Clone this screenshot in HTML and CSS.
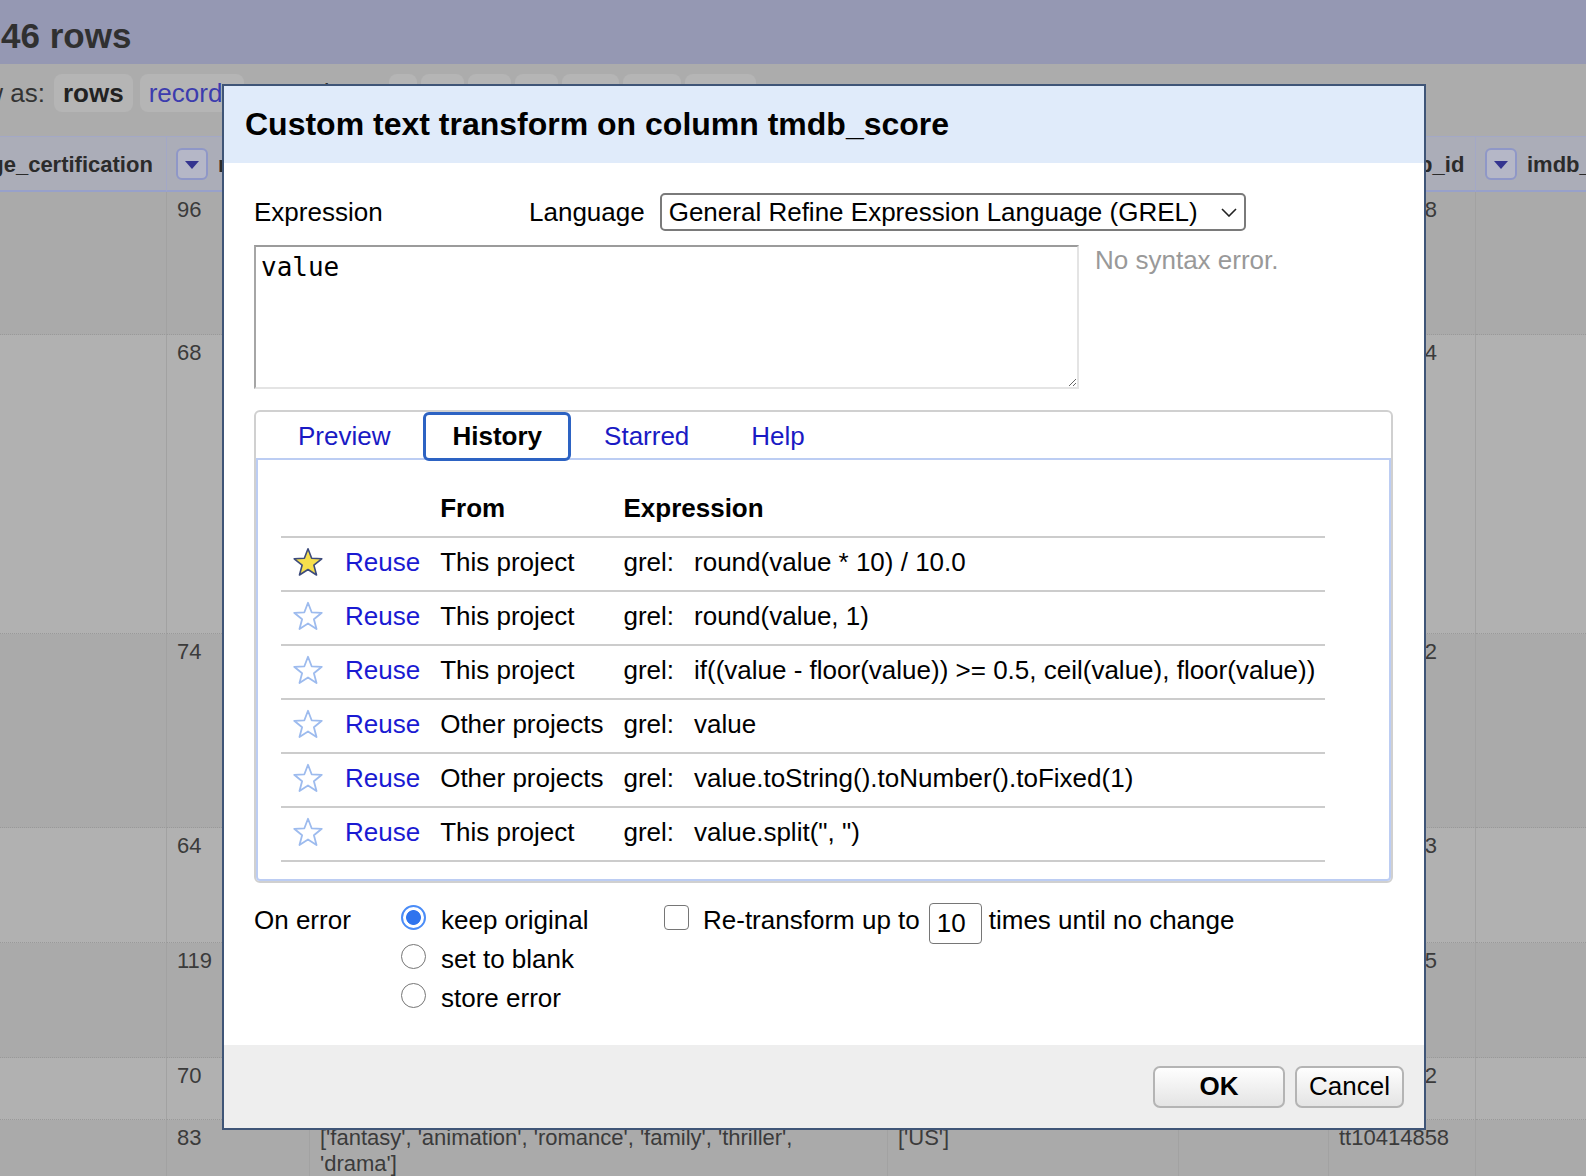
FILE: index.html
```html
<!DOCTYPE html>
<html>
<head>
<meta charset="utf-8">
<title>Custom text transform</title>
<link rel="stylesheet" href="styles.css">
</head>
<body>
<div class="page">
  <div class="topbar"><span class="count">46 rows</span></div>
  <div class="toolbar">
    <span class="lead">Show as:</span>
    <span class="tb-btn sel">rows</span>
    <span class="tb-btn link gap-s">records</span>
    <span class="show">Show:</span>
    <span class="tb-btn link size first">5</span>
    <span class="tb-btn sel size">10</span>
    <span class="tb-btn link size">25</span>
    <span class="tb-btn link size">50</span>
    <span class="tb-btn link size">100</span>
    <span class="tb-btn link size">500</span>
    <span class="tb-btn link size">1000</span>
  </div>
  <div class="grid">
    <div class="hc"><span class="dd"><i class="tri"></i></span><span class="hname">age_certification</span></div>
    <div class="hc"><span class="dd"><i class="tri"></i></span><span class="hname">runtime</span></div>
    <div class="hc"><span class="dd"><i class="tri"></i></span><span class="hname">genres</span></div>
    <div class="hc"><span class="dd"><i class="tri"></i></span><span class="hname">production_countries</span></div>
    <div class="hc"><span class="dd"><i class="tri"></i></span><span class="hname">seasons</span></div>
    <div class="hc"><span class="dd"><i class="tri"></i></span><span class="hname">imdb_id</span></div>
    <div class="hc"><span class="dd"><i class="tri"></i></span><span class="hname">imdb_score</span></div>

    <div class="row odd">
      <div class="c"></div><div class="c">96</div><div class="c">['drama', 'crime']</div><div class="c">['US']</div><div class="c"></div><div class="c">tt0108778</div><div class="c"></div>
    </div>
    <div class="row even">
      <div class="c"></div><div class="c">68</div><div class="c">['comedy']</div><div class="c">['US']</div><div class="c"></div><div class="c">tt0098904</div><div class="c"></div>
    </div>
    <div class="row odd">
      <div class="c"></div><div class="c">74</div><div class="c">['drama']</div><div class="c">['GB']</div><div class="c"></div><div class="c">tt0141842</div><div class="c"></div>
    </div>
    <div class="row even">
      <div class="c"></div><div class="c">64</div><div class="c">['action']</div><div class="c">['US']</div><div class="c"></div><div class="c">tt0417373</div><div class="c"></div>
    </div>
    <div class="row odd">
      <div class="c"></div><div class="c">119</div><div class="c">['thriller']</div><div class="c">['US']</div><div class="c"></div><div class="c">tt0121955</div><div class="c"></div>
    </div>
    <div class="row even">
      <div class="c"></div><div class="c">70</div><div class="c">['family']</div><div class="c">['US']</div><div class="c"></div><div class="c">tt0096542</div><div class="c"></div>
    </div>
    <div class="row odd">
      <div class="c"></div><div class="c">83</div><div class="c">['fantasy', 'animation', 'romance', 'family', 'thriller', 'drama']</div><div class="c">['US']</div><div class="c"></div><div class="c">tt10414858</div><div class="c"></div>
    </div>
  </div>
</div>

<div class="dialog">
  <div class="dlg-head">Custom text transform on column tmdb_score</div>
  <div class="dlg-body">
    <div class="expr-head">
      <span class="lbl-expr">Expression</span>
      <span class="lbl-lang">Language</span>
      <div class="select-wrap">
        <select class="lang"><option>General Refine Expression Language (GREL)</option></select>
        <svg class="chev" viewBox="0 0 16 9"><path d="M1 1 L8 8 L15 1"/></svg>
      </div>
    </div>
    <div class="expr-main">
      <textarea class="expr" spellcheck="false">value</textarea>
      <div class="status">No syntax error.</div>
    </div>
    <div class="tabs">
      <div class="tab-nav">
        <span class="tab">Preview</span>
        <span class="tab active">History</span>
        <span class="tab">Starred</span>
        <span class="tab">Help</span>
      </div>
      <div class="tab-panel">
        <table class="hist">
          <thead>
            <tr><th></th><th></th><th>From</th><th colspan="2">Expression</th></tr>
          </thead>
          <tbody>
            <tr>
              <td class="st"><svg class="star on" viewBox="0 0 32 32"><path d="M16 2.8 L19.64 12.28 L29.79 12.82 L21.9 19.22 L24.52 29.03 L16 23.5 L7.48 29.03 L10.1 19.22 L2.21 12.82 L12.36 12.28 Z"/></svg></td>
              <td><a class="reuse">Reuse</a></td><td>This project</td><td>grel:</td><td>round(value * 10) / 10.0</td>
            </tr>
            <tr>
              <td class="st"><svg class="star" viewBox="0 0 32 32"><path d="M16 2.8 L19.64 12.28 L29.79 12.82 L21.9 19.22 L24.52 29.03 L16 23.5 L7.48 29.03 L10.1 19.22 L2.21 12.82 L12.36 12.28 Z"/></svg></td>
              <td><a class="reuse">Reuse</a></td><td>This project</td><td>grel:</td><td>round(value, 1)</td>
            </tr>
            <tr>
              <td class="st"><svg class="star" viewBox="0 0 32 32"><path d="M16 2.8 L19.64 12.28 L29.79 12.82 L21.9 19.22 L24.52 29.03 L16 23.5 L7.48 29.03 L10.1 19.22 L2.21 12.82 L12.36 12.28 Z"/></svg></td>
              <td><a class="reuse">Reuse</a></td><td>This project</td><td>grel:</td><td>if((value - floor(value)) &gt;= 0.5, ceil(value), floor(value))</td>
            </tr>
            <tr>
              <td class="st"><svg class="star" viewBox="0 0 32 32"><path d="M16 2.8 L19.64 12.28 L29.79 12.82 L21.9 19.22 L24.52 29.03 L16 23.5 L7.48 29.03 L10.1 19.22 L2.21 12.82 L12.36 12.28 Z"/></svg></td>
              <td><a class="reuse">Reuse</a></td><td>Other projects</td><td>grel:</td><td>value</td>
            </tr>
            <tr>
              <td class="st"><svg class="star" viewBox="0 0 32 32"><path d="M16 2.8 L19.64 12.28 L29.79 12.82 L21.9 19.22 L24.52 29.03 L16 23.5 L7.48 29.03 L10.1 19.22 L2.21 12.82 L12.36 12.28 Z"/></svg></td>
              <td><a class="reuse">Reuse</a></td><td>Other projects</td><td>grel:</td><td>value.toString().toNumber().toFixed(1)</td>
            </tr>
            <tr>
              <td class="st"><svg class="star" viewBox="0 0 32 32"><path d="M16 2.8 L19.64 12.28 L29.79 12.82 L21.9 19.22 L24.52 29.03 L16 23.5 L7.48 29.03 L10.1 19.22 L2.21 12.82 L12.36 12.28 Z"/></svg></td>
              <td><a class="reuse">Reuse</a></td><td>This project</td><td>grel:</td><td>value.split(", ")</td>
            </tr>
          </tbody>
        </table>
      </div>
    </div>
    <div class="onerror">
      <div class="oe-label">On error</div>
      <div class="oe-options">
        <label class="opt"><input type="radio" name="oe" class="radio" checked><span>keep original</span></label>
        <label class="opt"><input type="radio" name="oe" class="radio"><span>set to blank</span></label>
        <label class="opt"><input type="radio" name="oe" class="radio"><span>store error</span></label>
      </div>
      <div class="retransform">
        <input type="checkbox" class="check">
        <span class="rt-text">Re-transform up to</span>
        <input type="text" class="times" value="10">
        <span>times until no change</span>
      </div>
    </div>
  </div>
  <div class="dlg-foot">
    <button class="btn ok">OK</button>
    <button class="btn">Cancel</button>
  </div>
</div>
</body>
</html>
```

FILE: styles.css
```css
html, body {
  margin: 0;
  padding: 0;
  width: 1586px;
  height: 1176px;
  overflow: hidden;
}
body {
  position: relative;
  background: #b0b0b0;
  font-family: "Liberation Sans", Arial, Helvetica, sans-serif;
  color: #000;
}

/* ---------- background page (dimmed) ---------- */
.topbar {
  height: 64px;
  box-sizing: border-box;
  padding: 16px 0 0 1px;
  background: #9598b3;
  line-height: 40px;
}
.count {
  font-size: 35px;
  font-weight: bold;
  color: #303030;
  white-space: nowrap;
}
.toolbar {
  height: 72px;
  box-sizing: border-box;
  padding-top: 10px;
  background: #acacac;
  display: flex;
  align-items: flex-start;
  font-size: 26px;
  color: #333;
  white-space: nowrap;
}
.lead {
  margin-left: -62px;
  line-height: 38px;
}
.tb-btn {
  height: 38px;
  line-height: 38px;
  padding: 0 9px;
  border-radius: 8px;
  background: #b5b5b5;
  margin-left: 9px;
}
.tb-btn.gap-s { margin-left: 7px; }
.tb-btn.sel { font-weight: bold; color: #222; }
.tb-btn.link { color: #3c3cae; }
.show { margin-left: 62px; line-height: 38px; }
.tb-btn.size { margin-left: 4px; padding: 0 7px; }
.tb-btn.size.first { margin-left: 10px; }

.grid {
  display: grid;
  grid-template-columns: 240px 143px 578px 291px 150px 147px 200px;
  grid-template-rows: 56px 143px 299px 194px 115px 115px 62px 90px;
  margin-left: -73px;
  width: 1749px;
  font-size: 22px;
  color: #3b3b3b;
}
.hc {
  display: flex;
  align-items: center;
  padding: 0 9px;
  box-sizing: border-box;
  background: #abadb8;
  border-top: 1px solid #a3a8c6;
  border-bottom: 2px solid #98a1ca;
  border-right: 1px solid #a3a8c6;
  font-weight: bold;
  color: #2b2b2b;
  white-space: nowrap;
  overflow: hidden;
}
.dd {
  flex: none;
  width: 32px;
  height: 32px;
  box-sizing: border-box;
  border: 2px solid #8f97c7;
  border-radius: 6px;
  background: #b5b7c7;
  display: flex;
  align-items: center;
  justify-content: center;
}
.tri {
  width: 0;
  height: 0;
  border-left: 7px solid transparent;
  border-right: 7px solid transparent;
  border-top: 8px solid #34348f;
  margin-top: 2px;
}
.hname { margin-left: 10px; line-height: 26px; padding-top: 3px; }

.row { display: contents; }
.c {
  padding: 5px 16px 5px 10px;
  line-height: 26px;
  box-sizing: border-box;
  border-right: 1px solid #a2a2a2;
  border-bottom: 1px dotted #999;
  overflow: hidden;
}
.odd .c { background: #aaaaaa; }
.even .c { background: #b1b1b1; }

/* ---------- dialog ---------- */
.dialog {
  position: absolute;
  left: 222px;
  top: 84px;
  width: 1204px;
  height: 1046px;
  box-sizing: border-box;
  border: 2px solid #3f5577;
  background: #fff;
  display: flex;
  flex-direction: column;
  font-size: 26px;
}
.dlg-head {
  flex: none;
  height: 77px;
  line-height: 77px;
  padding-left: 21px;
  background: #e0ebfa;
  font-size: 32px;
  font-weight: bold;
  white-space: nowrap;
}
.dlg-body {
  flex: 1;
  padding: 30px 30px 0;
}
.expr-head {
  display: flex;
  align-items: center;
  height: 38px;
}
.lbl-expr { width: 275px; }
.select-wrap {
  position: relative;
  margin-left: 15px;
  height: 38px;
}
.lang {
  appearance: none;
  -webkit-appearance: none;
  width: 586px;
  height: 38px;
  box-sizing: border-box;
  border: 2px solid #7a7a7a;
  border-radius: 5px;
  background: #fff;
  color: #000;
  font-family: "Liberation Sans", Arial, sans-serif;
  font-size: 26px;
  padding: 0 0 0 7px;
  margin: 0;
}
.chev {
  position: absolute;
  right: 9px;
  top: 15px;
  width: 16px;
  height: 9px;
  fill: none;
  stroke: #222;
  stroke-width: 1.6;
}
.expr-main {
  display: flex;
  align-items: flex-start;
  margin-top: 14px;
}
.expr {
  width: 825px;
  height: 144px;
  box-sizing: border-box;
  margin: 0;
  padding: 5px;
  border: 2px solid;
  border-color: #9b9b9b #e4e4e4 #e4e4e4 #a6a6a6;
  font-family: "DejaVu Sans Mono", monospace;
  font-size: 26px;
  color: #000;
  resize: both;
  outline: none;
}
.status {
  margin-left: 16px;
  line-height: 30px;
  color: #999;
}

.tabs {
  margin-top: 21px;
  width: 1139px;
  height: 473px;
  box-sizing: border-box;
  border: 2px solid #d0d0d0;
  border-radius: 6px;
}
.tab-nav {
  height: 46px;
  display: flex;
  align-items: flex-start;
  padding-left: 13px;
}
.tab {
  height: 49px;
  box-sizing: border-box;
  border: 3px solid transparent;
  border-radius: 6px;
  padding: 0 26px;
  line-height: 43px;
  margin-right: 4px;
  color: #1a1ac4;
  white-space: nowrap;
}
.tab.active {
  border-color: #2d63c3;
  background: #fff;
  color: #000;
  font-weight: bold;
  position: relative;
  z-index: 1;
}
.tab-panel {
  height: 423px;
  box-sizing: border-box;
  border: 2px solid #bccdf3;
  border-radius: 0 0 4px 4px;
  padding: 24px 0 0 23px;
}
.hist {
  border-collapse: separate;
  border-spacing: 0;
  font-size: 26px;
}
.hist th, .hist td {
  padding: 10px 10px 14px;
  line-height: 28px;
  text-align: left;
  vertical-align: middle;
  white-space: nowrap;
  border-bottom: 2px solid #cccccc;
}
.hist th { font-weight: bold; }
.hist td.st { padding: 8px 11px 12px; }
.star {
  display: block;
  width: 32px;
  height: 32px;
  fill: #fff;
  stroke: #9dbbee;
  stroke-width: 1.8;
  stroke-linejoin: round;
}
.star.on {
  fill: #f6df4c;
  stroke: #3d4b7c;
  stroke-width: 1.6;
}
.reuse { color: #1a1ad2; text-decoration: none; }

.onerror {
  display: flex;
  align-items: flex-start;
  margin-top: 22px;
  line-height: 30px;
}
.oe-label { width: 147px; }
.oe-options {
  width: 263px;
  display: flex;
  flex-direction: column;
}
.opt {
  display: flex;
  align-items: flex-start;
  height: 39px;
}
.radio {
  appearance: none;
  -webkit-appearance: none;
  flex: none;
  width: 25px;
  height: 25px;
  box-sizing: border-box;
  margin: 0 15px 0 0;
  border: 1.5px solid #767676;
  border-radius: 50%;
  background: #fff;
}
.radio:checked {
  border: 2px solid #4a8cf7;
  background: radial-gradient(circle, #2f74ee 0, #2f74ee 7px, #fff 7.8px);
}
.retransform {
  display: flex;
  align-items: flex-start;
  white-space: nowrap;
}
.check {
  appearance: none;
  -webkit-appearance: none;
  flex: none;
  width: 25px;
  height: 25px;
  box-sizing: border-box;
  margin: 0 14px 0 0;
  border: 1.5px solid #767676;
  border-radius: 4px;
  background: #fff;
}
.times {
  width: 53px;
  height: 41px;
  box-sizing: border-box;
  margin: -2px 7px 0 9px;
  padding: 0 7px;
  border: 1.5px solid #767676;
  border-radius: 4px;
  font-family: "Liberation Sans", Arial, sans-serif;
  font-size: 26px;
  color: #000;
  outline: none;
}

.dlg-foot {
  flex: none;
  height: 83px;
  background: #eeeeee;
  display: flex;
  justify-content: flex-end;
  align-items: center;
  padding-right: 20px;
}
.btn {
  height: 42px;
  margin: 0;
  padding: 0 12px;
  border: 2px solid #b4b4b4;
  border-radius: 7px;
  background: linear-gradient(#fefefe, #e4e4e4);
  color: #000;
  font-family: "Liberation Sans", Arial, sans-serif;
  font-size: 26px;
}
.btn.ok {
  width: 132px;
  font-weight: bold;
  margin-right: 10px;
}
```
